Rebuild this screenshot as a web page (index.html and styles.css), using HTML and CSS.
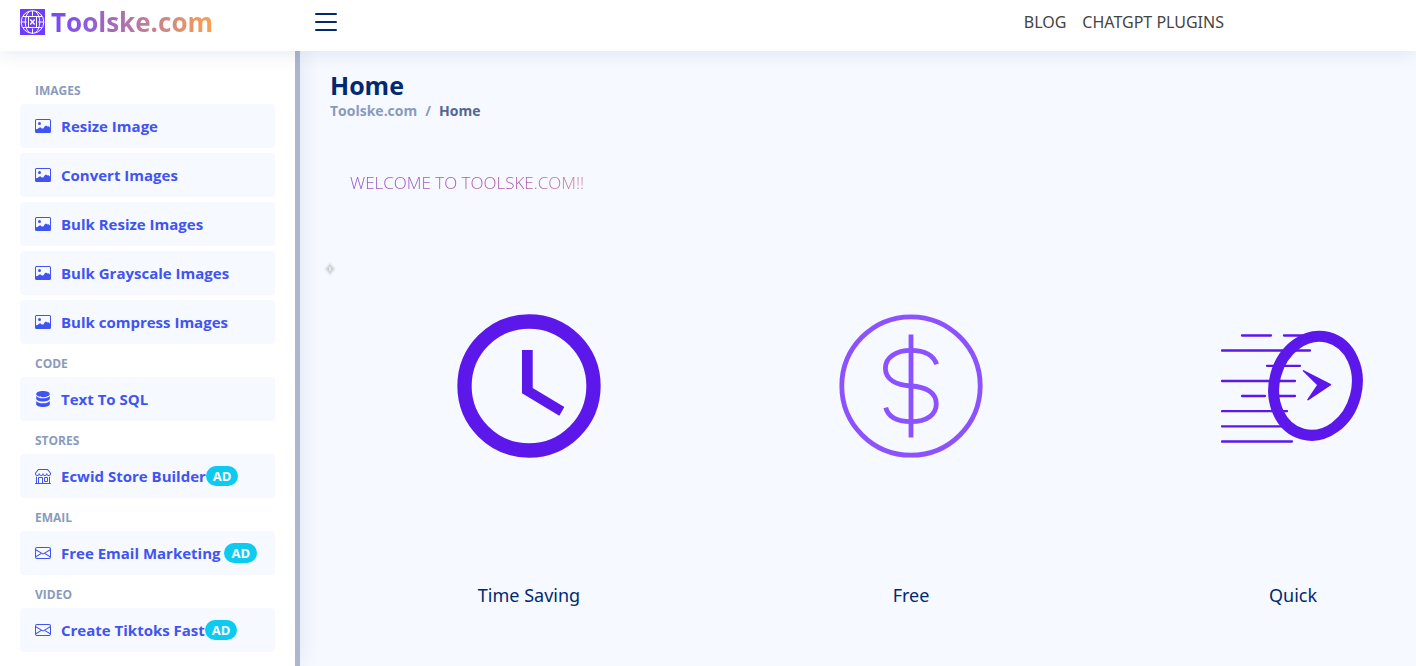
FILE: index.html
```html
<!DOCTYPE html>
<html lang="en">
<head>
<meta charset="utf-8">
<title>Toolske.com</title>
<link rel="stylesheet" href="styles.css">
</head>
<body>
<svg class="defs" aria-hidden="true">
  <symbol id="i-image" viewBox="0 0 16 16"><circle cx="4.500" cy="5.500" r="1.500"/><path d="M1.500 1A1.500 1.500 0 0 0 0 2.500v11A1.500 1.500 0 0 0 1.500 15h13a1.500 1.500 0 0 0 1.500-1.500v-11A1.500 1.500 0 0 0 14.500 1h-13zM14.500 2a.5.5 0 0 1 .5.5v7L13.500 8.300 12.500 8.600 11 7.600 9.800 8.200 8.300 10.400 6.800 10.600 5.300 9.200 4 9.800 2.500 11 1 11.300V2.500a.5.5 0 0 1 .5-.5h13z"/></symbol>
  <symbol id="i-mail" viewBox="0 0 16 16"><path d="M0 4a2 2 0 0 1 2-2h12a2 2 0 0 1 2 2v8a2 2 0 0 1-2 2H2a2 2 0 0 1-2-2V4Zm2-1a1 1 0 0 0-1 1v.217l7 4.2 7-4.2V4a1 1 0 0 0-1-1H2Zm13 2.383-4.708 2.825L15 11.105V5.383Zm-.034 6.876-5.64-3.471L8 9.583l-1.326-.795-5.64 3.47A1 1 0 0 0 2 13h12a1 1 0 0 0 .966-.741ZM1 11.105l4.708-2.897L1 5.383v5.722Z"/></symbol>
  <symbol id="i-shop" viewBox="0 0 16 16"><path d="M2.97 1.35A1 1 0 0 1 3.73 1h8.54a1 1 0 0 1 .76.35l2.609 3.044A1.5 1.5 0 0 1 16 5.37v.255a2.375 2.375 0 0 1-4.25 1.458A2.371 2.371 0 0 1 9.875 8 2.37 2.37 0 0 1 8 7.083 2.37 2.37 0 0 1 6.125 8a2.37 2.37 0 0 1-1.875-.917A2.375 2.375 0 0 1 0 5.625V5.37a1.5 1.5 0 0 1 .361-.976l2.61-3.045zm1.78 4.275a1.375 1.375 0 0 0 2.75 0 .5.5 0 0 1 1 0 1.375 1.375 0 0 0 2.75 0 .5.5 0 0 1 1 0 1.375 1.375 0 1 0 2.75 0V5.37a.5.5 0 0 0-.12-.325L12.27 2H3.73L1.12 5.045A.5.5 0 0 0 1 5.37v.255a1.375 1.375 0 0 0 2.75 0 .5.5 0 0 1 1 0zM1.5 8.5A.5.5 0 0 1 2 9v6h1v-5a1 1 0 0 1 1-1h3a1 1 0 0 1 1 1v5h6V9a.5.5 0 0 1 1 0v6h.5a.5.5 0 0 1 0 1H.5a.5.5 0 0 1 0-1H1V9a.5.5 0 0 1 .5-.5zM4 15h3v-5H4v5zm5-5a1 1 0 0 1 1-1h2a1 1 0 0 1 1 1v3a1 1 0 0 1-1 1h-2a1 1 0 0 1-1-1v-3zm3 0h-2v3h2v-3z"/></symbol>
  <symbol id="i-database" viewBox="0 0 16 16"><path d="M8 0C4.300 0 1.200 1.200 1.200 3.100S4.300 6.200 8 6.200s6.800-1.200 6.800-3.100S11.700 0 8 0zM1.200 5v2.400c0 1.800 3.100 3.100 6.800 3.100s6.800-1.300 6.800-3.100V5C13.500 6.500 11 7.300 8 7.300S2.500 6.500 1.200 5zM1.200 10v3c0 1.800 3.100 3 6.800 3s6.800-1.200 6.800-3v-3c-1.300 1.400-3.800 2.300-6.800 2.300S2.500 11.400 1.200 10z"/></symbol>
</svg>

<header class="header">
  <div class="brand">
    <a class="logo" href="#">
      <svg class="logo-icon" viewBox="0 0 25 26" aria-hidden="true">
        <rect width="25" height="26" fill="#6c3cff"/>
        <g fill="none" stroke="#fff" stroke-width="1">
          <circle cx="12.500" cy="13" r="11.300"/>
          <path d="M9.500 2.300C3.800 7 3.800 19 9.500 23.700M15.500 2.300c5.700 4.700 5.700 16.700 0 21.400M12.500 1.700v5M12.500 19.500v5M3 7.500h19M1.200 13h5.500M18.300 13h5.500M3 18.500h19M8.500 7.500v11M16.500 7.500v11"/>
          <path d="M10.300 10.500l4.400 5M14.700 10.500l-4.400 5" stroke-width="1.400"/>
        </g>
      </svg>
      <span class="logo-text">Toolske.com</span>
    </a>
    <button class="menu-toggle" type="button" aria-label="Toggle sidebar">
      <svg viewBox="0 0 22 18" aria-hidden="true"><path d="M1 1h20M1 9h20M1 17h20"/></svg>
    </button>
  </div>
  <nav class="top-nav" aria-label="Main">
    <a href="#">BLOG</a>
    <a href="#">CHATGPT PLUGINS</a>
  </nav>
</header>

<div class="shell">
  <aside class="sidebar">
    <nav aria-label="Tools">
      <h2 class="nav-heading">Images</h2>
      <ul class="nav-list">
        <li><a class="nav-link" href="#"><svg class="icon"><use href="#i-image"/></svg>Resize Image</a></li>
        <li><a class="nav-link" href="#"><svg class="icon"><use href="#i-image"/></svg>Convert Images</a></li>
        <li><a class="nav-link" href="#"><svg class="icon"><use href="#i-image"/></svg>Bulk Resize Images</a></li>
        <li><a class="nav-link" href="#"><svg class="icon"><use href="#i-image"/></svg>Bulk Grayscale Images</a></li>
        <li><a class="nav-link" href="#"><svg class="icon"><use href="#i-image"/></svg>Bulk compress Images</a></li>
      </ul>
      <h2 class="nav-heading">Code</h2>
      <ul class="nav-list">
        <li><a class="nav-link" href="#"><svg class="icon"><use href="#i-database"/></svg>Text To SQL</a></li>
      </ul>
      <h2 class="nav-heading">Stores</h2>
      <ul class="nav-list">
        <li><a class="nav-link" href="#"><svg class="icon"><use href="#i-shop"/></svg>Ecwid Store Builder<span class="badge">AD</span></a></li>
      </ul>
      <h2 class="nav-heading">Email</h2>
      <ul class="nav-list">
        <li><a class="nav-link" href="#"><svg class="icon"><use href="#i-mail"/></svg>Free Email Marketing&nbsp;<span class="badge">AD</span></a></li>
      </ul>
      <h2 class="nav-heading">Video</h2>
      <ul class="nav-list">
        <li><a class="nav-link" href="#"><svg class="icon"><use href="#i-mail"/></svg>Create Tiktoks Fast<span class="badge">AD</span></a></li>
      </ul>
    </nav>
  </aside>

  <main class="main">
    <h1 class="title">Home</h1>
    <nav class="breadcrumb" aria-label="Breadcrumb">
      <a href="#">Toolske.com</a><span>/</span><span class="current">Home</span>
    </nav>
    <p class="welcome">WELCOME TO TOOLSKE.COM!!</p>
    <svg class="spark" viewBox="0 0 16 16" aria-hidden="true">
      <path class="spark-glow" d="M8 2l2 4 3 2-3 2-2 4-2-4-3-2 3-2z" fill="#c4c6ca"/>
      <rect x="7" y="6" width="2" height="4" fill="#ecebdd"/>
    </svg>
    <div class="features">
      <section class="feature">
        <svg viewBox="0 0 144 144" aria-hidden="true">
          <circle cx="72" cy="72" r="64.500" fill="none" stroke="#5c17eb" stroke-width="14.300"/>
          <path d="M65 36h10.700v38l31.600 19-5 8.700L65 79.300z" fill="#5c17eb"/>
        </svg>
        <h2>Time Saving</h2>
      </section>
      <section class="feature">
        <svg viewBox="0 0 144 144" aria-hidden="true">
          <g fill="none" stroke="#8c52ff" stroke-width="4.800">
            <circle cx="72" cy="72" r="69.200"/>
            <path d="M72 20.500v103"/>
            <path d="M97.700 50.300C94 40 85 36.300 72 36.300c-15 0-25.600 7-25.600 18S57 71 72 72c15 .7 25.300 7 25.300 17.700S88 107.700 72 107.700c-13.500 0-22.500-4-25.300-14"/>
          </g>
        </svg>
        <h2>Free</h2>
      </section>
      <section class="feature">
        <svg viewBox="1221 314 144 144" aria-hidden="true">
          <path d="M1242 335.500h29M1284 335.500h20M1222 350.500h88M1267 365.800h33M1222 381h73M1242 396h23M1279 396h16M1222 411.200h65M1222 426.300h62M1222 441.500h70" fill="none" stroke="#5c17eb" stroke-width="2.300" stroke-linecap="round"/>
          <ellipse cx="1315.500" cy="385.800" rx="41.200" ry="50" transform="rotate(14.700 1315.500 385.800)" fill="none" stroke="#5c17eb" stroke-width="11"/>
          <path d="M1303.500 370.800l27 13.900-22.500 15 10-14.700z" fill="#5c17eb" stroke="#5c17eb" stroke-width="1.500" stroke-linejoin="round"/>
        </svg>
        <h2>Quick</h2>
      </section>
    </div>
  </main>
</div>
</body>
</html>
```
FILE: styles.css
```css
* { box-sizing: border-box; }

body {
  margin: 0;
  min-height: 100vh;
  display: flex;
  flex-direction: column;
  overflow: hidden;
  background: #f6f9ff;
  color: #444;
  font-family: "Segoe UI", "Open Sans", "Noto Sans", sans-serif;
  font-size: 16px;
}

a { text-decoration: none; }

.defs {
  position: absolute;
  width: 0;
  height: 0;
}

.header {
  position: relative;
  z-index: 2;
  display: flex;
  justify-content: space-between;
  height: 51px;
  padding: 0 192px 8px 20px;
  align-items: center;
  background: #fff;
  box-shadow: 0 2px 20px rgba(1, 41, 112, 0.1);
}

.brand {
  display: flex;
  align-items: center;
}

.logo {
  display: flex;
  align-items: center;
  gap: 6px;
  width: 295px;
}

.logo-icon {
  width: 25px;
  height: 26px;
}

.logo-text {
  font-size: 26px;
  font-weight: 700;
  line-height: 36px;
  background: linear-gradient(90deg, #7248ff, #f9a14e);
  -webkit-background-clip: text;
  background-clip: text;
  color: transparent;
}

.menu-toggle {
  display: flex;
  padding: 0;
  border: 0;
  background: none;
}

.menu-toggle svg {
  width: 22px;
  height: 18px;
  fill: none;
  stroke: #012970;
  stroke-width: 2;
  stroke-linecap: round;
}

.top-nav {
  display: flex;
  gap: 16px;
  font-family: "Segoe UI", "Noto Sans", sans-serif;
}

.top-nav a { color: #444; }

.shell {
  flex: 1;
  display: flex;
}

.sidebar {
  position: relative;
  z-index: 1;
  flex: none;
  width: 300px;
  padding: 20px 20px 14px;
  background: #fff;
  border-right: 5px solid #aab7cf;
  box-shadow: 0 0 20px rgba(1, 41, 112, 0.1);
}

.nav-heading {
  margin: 0;
  padding: 11px 0 4px 15px;
  font-size: 12px;
  font-weight: 700;
  line-height: 18px;
  text-transform: uppercase;
  color: #899bbd;
}

.nav-list {
  display: grid;
  gap: 5px;
  margin: 0;
  padding: 0;
  list-style: none;
}

.nav-link {
  display: flex;
  align-items: center;
  height: 44px;
  padding: 0 15px;
  border-radius: 4px;
  background: #f6f9ff;
  color: #4154f1;
  font-size: 15px;
  font-weight: 700;
  white-space: nowrap;
}

.icon {
  flex: none;
  width: 16px;
  height: 16px;
  margin-right: 10px;
  fill: currentColor;
}

.badge {
  padding: 0 7px;
  border-radius: 10px;
  background: #0dcaf0;
  color: #fff;
  font-size: 13px;
  line-height: 20px;
}

.main {
  flex: 1;
  min-width: 0;
  padding: 18px 30px;
}

.title {
  margin: 0;
  font-size: 25px;
  font-weight: 700;
  line-height: 32px;
  color: #012970;
}

.breadcrumb {
  display: flex;
  gap: 8px;
  font-size: 14px;
  font-weight: 700;
  line-height: 20px;
  color: #899bbd;
}

.breadcrumb a { color: #899bbd; }

.breadcrumb .current { color: #51678f; }

.welcome {
  margin: 50px 20px 0;
  font-size: 17px;
  font-weight: 300;
  line-height: 24px;
  background: linear-gradient(90deg, #9452c8 0, #aa58a4 170px, #cc88a4 240px, #f9a14e 100%);
  -webkit-background-clip: text;
  background-clip: text;
  color: transparent;
}

.spark {
  display: block;
  width: 16px;
  height: 16px;
  margin: 66px 0 0 -8px;
}

.spark-glow { filter: blur(1px); }

.features {
  display: grid;
  grid-template-columns: repeat(3, 1fr);
  width: calc(100% + 90px);
  margin: 37px 0 0 8px;
}

.feature {
  display: flex;
  flex-direction: column;
  align-items: center;
  gap: 124px;
}

.feature svg {
  width: 144px;
  height: 144px;
}

.feature h2 {
  margin: 0;
  font-family: "Segoe UI", "Noto Sans", sans-serif;
  font-size: 18px;
  font-weight: 400;
  line-height: 26px;
  color: #012970;
}
```
